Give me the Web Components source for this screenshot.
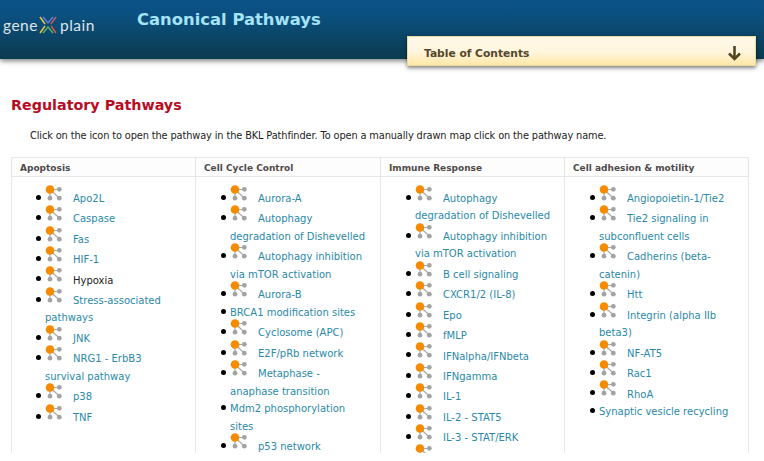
<!DOCTYPE html>
<html>
<head>
<meta charset="utf-8">
<title>Canonical Pathways</title>
<style>
html, body { margin: 0; padding: 0; height: 461px; overflow: hidden; background: #fff; }
body { font-family: "DejaVu Sans", Verdana, sans-serif; font-size: 10px; color: #222; }
</style>
</head>
<body>
<page-header heading="Canonical Pathways"></page-header>
<page-section heading="Regulatory Pathways" intro="Click on the icon to open the pathway in the BKL Pathfinder. To open a manually drawn map click on the pathway name."></page-section>

<script>
/**
 * Top bar with the logo, the page title and the contents drop down.
 */
customElements.define('page-header', class extends HTMLElement {
  constructor () {
    super()
    this.attachShadow({ mode: 'open' }).innerHTML = `
<style>
:host { display: block; position: relative; height: 59px; }
#bar {
  height: 59px;
  display: flex;
  align-items: flex-start;
  background: linear-gradient(#0b5288, #0b5080 25%, #0b3a4e);
  box-shadow: 0 2px 5px rgba(0, 0, 0, 0.5);
}
#logo {
  width: 137px;
  height: 34px;
  margin-top: 8px;
  padding-left: 3px;
  box-sizing: border-box;
  display: flex;
  align-items: center;
  color: #dde4e8;
  font: 400 15.5px "Lato", sans-serif;
  letter-spacing: 0.5px;
}
#logo svg { margin: 0 3px 0 1px; }
h1 {
  margin: 10px 0 0;
  color: #a5e3f8;
  font: bold 16.4px "DejaVu Sans", sans-serif;
}
#toc {
  position: absolute;
  left: 407px;
  top: 36px;
  width: 349px;
  height: 30px;
  box-sizing: border-box;
  padding: 4px 16px 0;
  display: flex;
  align-items: center;
  justify-content: space-between;
  background: linear-gradient(#fff8e9, #fff6e0 50%, #ffe8a8);
  border: 1px solid #ecd9a0;
  box-shadow: 0 2px 4px rgba(0, 0, 0, 0.5);
  color: #55472a;
  font: bold 10.7px "DejaVu Sans", sans-serif;
}
#toc svg { margin-right: -2px; }
</style>
<div id="bar">
  <div id="logo">gene<svg width="18" height="18" viewBox="0 0 18 18" fill="none" stroke-width="1.4">
    <path d="M1 1 L6 8" stroke="#e8c84a"/><path d="M6 10 L1 17" stroke="#e8c84a"/>
    <path d="M17 1 L12 8" stroke="#d8574f"/><path d="M12 10 L17 17" stroke="#d8574f"/>
    <path d="M4 1 L9 7 L14 1" stroke="#6a7fd8"/>
    <path d="M4 17 L9 11 L14 17" stroke="#5fb55f"/>
  </svg>plain</div>
  <h1>${this.getAttribute('heading')}</h1>
</div>
<div id="toc">
  <span>Table of Contents</span>
  <svg width="13" height="16" viewBox="0 0 13 16" fill="none" stroke="#524522" stroke-width="2.6">
    <path d="M6.5 1 V14"/><path d="M1 8.5 L6.5 14 L12 8.5"/>
  </svg>
</div>`
  }
})

/**
 * Small orange and gray network icon in front of a pathway.
 */
customElements.define('pathway-icon', class extends HTMLElement {
  constructor () {
    super()
    this.attachShadow({ mode: 'open' }).innerHTML = `
<style>
:host { display: inline-block; width: 28px; height: 14.8px; position: relative; }
svg { position: absolute; left: 0; bottom: 0; }
</style>
<svg width="18" height="17" viewBox="0 0 18 17">
  <path d="M5 4.5 H14.3 M5 4.5 V13 M5 4.5 L14.3 13" stroke="#aaa" stroke-width="1.2"/>
  <circle cx="14.3" cy="4.3" r="2.4" fill="#a3a3a3"/>
  <circle cx="5" cy="13.2" r="2.4" fill="#a3a3a3"/>
  <circle cx="14.3" cy="13.2" r="2.4" fill="#a3a3a3"/>
  <circle cx="5" cy="4.5" r="4.3" fill="#f68b00"/>
</svg>`
  }
})

/**
 * One column of the table, its items are given in the slot.
 */
customElements.define('pathway-column', class extends HTMLElement {
  constructor () {
    super()
    this.attachShadow({ mode: 'open' }).innerHTML = `
<style>
:host { display: block; border-left: 1px solid #e6e6e6; min-width: 0; }
:host(:first-child) { border-left: none; }
#title {
  height: 18px;
  line-height: 20px;
  padding-left: 8px;
  border-bottom: 1px solid #e6e6e6;
  background: #fdfdfd;
  color: #4f4a4a;
  font-weight: bold;
  font-size: 9px;
}
#list { padding: 10px 12px 0 34px; }
:host(:first-child) #list { padding-left: 33px; }
</style>
<div id="title">${this.getAttribute('heading')}</div>
<div id="list"><slot></slot></div>`
  }
})

/**
 * One entry of a column. The attribute "plain" leaves out the icon.
 */
customElements.define('pathway-item', class extends HTMLElement {
  constructor () {
    super()
    const icon = this.hasAttribute('plain') ? '' : '<pathway-icon></pathway-icon>'
    // no white space in front of the icon, it would push the line to the right
    this.attachShadow({ mode: 'open' }).innerHTML = `<style>
:host {
  display: block;
  line-height: 17.6px;
  color: #2a89a8;
  font-size: 10px;
}
:host::before {
  content: "";
  display: inline-block;
  width: 5px;
  height: 5px;
  margin: 0 4px 0 -9px;
  vertical-align: 2px;
  border-radius: 50%;
  background: #000;
}
:host([black]) { color: #222; }
</style>${icon}<slot></slot>`
  }
})

/**
 * The heading, the hint and the table below the top bar.
 */
customElements.define('page-section', class extends HTMLElement {
  constructor () {
    super()
    this.attachShadow({ mode: 'open' }).innerHTML = `
<style>
:host { display: block; padding: 38px 15px 0 11px; }
h2 {
  margin: 0;
  color: #b80c24;
  font: bold 14.3px "DejaVu Sans", sans-serif;
}
p { margin: 17px 0 0 19px; font-size: 9.8px; letter-spacing: -0.12px; color: #222; }
#table {
  margin-top: 16px;
  display: grid;
  grid-template-columns: 183px 185px 184px 184px;
  border: 1px solid #e6e6e6;
  border-bottom: none;
  height: 295px;
  overflow: hidden;
}
</style>
<h2>${this.getAttribute('heading')}</h2>
<p>${this.getAttribute('intro')}</p>
<div id="table"><slot></slot></div>`
    const columns = [
      ['Apoptosis', ['Apo2L', 'Caspase', 'Fas', 'HIF-1', '!Hypoxia', 'Stress-associated pathways', 'JNK', 'NRG1 - ErbB3 survival pathway', 'p38', 'TNF']],
      ['Cell Cycle Control', ['Aurora-A', 'Autophagy degradation of Dishevelled', 'Autophagy inhibition via mTOR activation', 'Aurora-B', '-BRCA1 modification sites', 'Cyclosome (APC)', 'E2F/pRb network', 'Metaphase - anaphase transition', '-Mdm2 phosphorylation sites', 'p53 network']],
      ['Immune Response', ['Autophagy degradation of Dishevelled', 'Autophagy inhibition via mTOR activation', 'B cell signaling', 'CXCR1/2 (IL-8)', 'Epo', 'fMLP', 'IFNalpha/IFNbeta', 'IFNgamma', 'IL-1', 'IL-2 - STAT5', 'IL-3 - STAT/ERK', '']],
      ['Cell adhesion &amp; motility', ['Angiopoietin-1/Tie2', 'Tie2 signaling in subconfluent cells', 'Cadherins (beta-catenin)', 'Htt', 'Integrin (alpha IIb beta3)', 'NF-AT5', 'Rac1', 'RhoA', '-Synaptic vesicle recycling']]
    ]
    this.innerHTML = columns.map(([heading, items]) => `
      <pathway-column heading="${heading}">${items.map((item) => {
        if (item[0] === '-') return `<pathway-item plain>${item.slice(1)}</pathway-item>`
        if (item[0] === '!') return `<pathway-item black>${item.slice(1)}</pathway-item>`
        return `<pathway-item>${item}</pathway-item>`
      }).join('')}</pathway-column>`).join('')
  }
})
</script>
</body>
</html>
